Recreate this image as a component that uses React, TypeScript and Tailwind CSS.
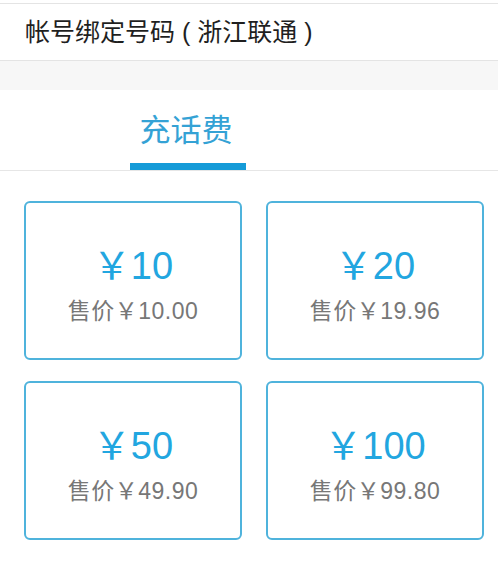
import React from "react";

const cards = [
  { face: "10", price: "10.00" },
  { face: "20", price: "19.96" },
  { face: "50", price: "49.90" },
  { face: "100", price: "99.80" },
];

export default function App() {
  return (
    <div className="w-[498px] h-[562px] bg-white overflow-hidden font-['Liberation_Sans','Noto_Sans_CJK_SC',sans-serif]">
      <div className="h-[3px]" />
      <div className="h-[58px] border-t border-b border-[#e4e4e4] flex items-center pl-[25px] text-[25px] text-[#1f1f1f] leading-none">
        帐号绑定号码 ( 浙江联通 )
      </div>
      <div className="h-[29px] bg-[#f7f7f7]" />
      <div className="h-[81px] border-b border-[#e6e6e6] flex">
        <div className="ml-[130px] w-[116px] flex flex-col items-center pt-[24px]">
          <div className="text-[31px] leading-[33px] text-[#34a2d5] pr-[4px]">充话费</div>
          <div className="mt-[16px] h-[7px] w-full bg-[#159bd8]" />
        </div>
      </div>
      <div className="pt-[30px] pl-[24px] grid grid-cols-[218px_218px] gap-x-[24px] gap-y-[21px]">
        {cards.map((c) => (
          <div
            key={c.face}
            className="h-[159px] border-2 border-[#4fb3dc] rounded-[6px] flex flex-col items-center pt-[44px]"
          >
            <div className="text-[38px] leading-[38px] text-[#22a6e0] whitespace-nowrap">
              ￥{c.face}
            </div>
            <div className="mt-[15px] text-[23px] leading-[23px] text-[#777777] whitespace-nowrap tracking-[0.5px]">
              售价￥{c.price}
            </div>
          </div>
        ))}
      </div>
    </div>
  );
}
